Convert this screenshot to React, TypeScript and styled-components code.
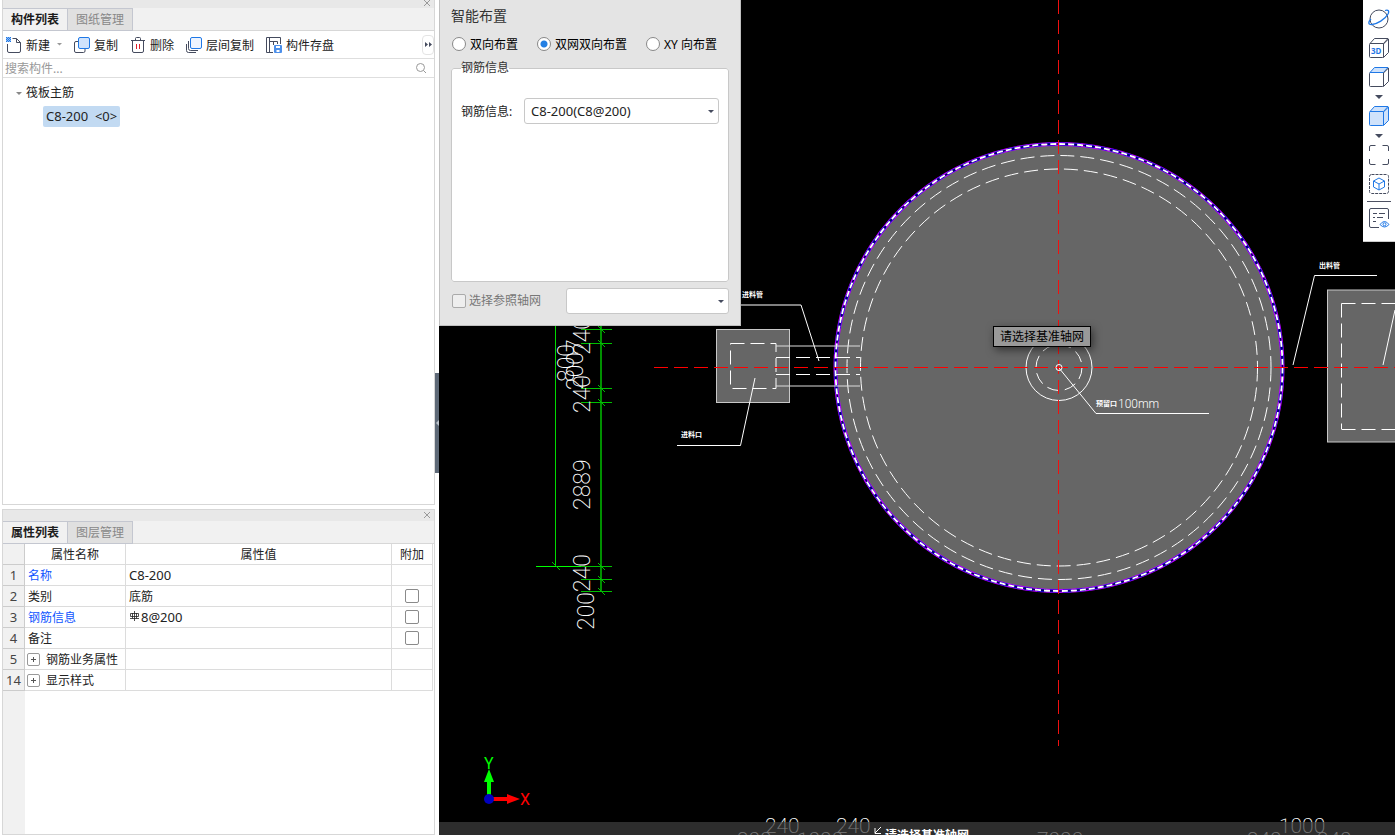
import React from "react";
import styled, { createGlobalStyle } from "styled-components";

const GlobalStyle = createGlobalStyle`
  * { box-sizing: border-box; }
  html, body { margin: 0; padding: 0; }
  body {
    font-family: "Noto Sans", "Noto Sans CJK SC", sans-serif;
    font-size: 12px;
    line-height: 20px;
    color: #222;
    background: #000;
  }
  button, input, select { font: inherit; color: inherit; margin: 0; }
`;

const Workspace = styled.div`
  display: flex;
  height: 100vh;
  overflow: hidden;
`;

const Sidebar = styled.aside`
  flex: 0 0 439px;
  display: grid;
  grid-template-columns: 433px 4px;
  grid-template-rows: 505px 1fr;
  row-gap: 4px;
  padding-left: 2px;
  background: #fff;
`;

const Panel = styled.section`
  display: flex;
  flex-direction: column;
  min-height: 0;
  border: 1px solid #d7d7d7;
  border-top: 0;
  background: #fff;
`;

const PanelBar = styled.div<{ $height: number }>`
  display: flex;
  align-items: center;
  justify-content: flex-end;
  flex: none;
  height: ${(p) => p.$height}px;
  padding: 0 2px 2px 0;
  background: #e8e8e8;
  border-top: ${(p) => (p.$height > 10 ? "1px solid #d7d7d7" : "0")};
`;

const CloseButton = styled.button`
  display: grid;
  place-items: center;
  width: 10px;
  height: 10px;
  padding: 0;
  border: 0;
  background: none;
`;

const TabBar = styled.div`
  display: flex;
  flex: none;
  height: 23px;
  background: #f1f1f1;
  border-bottom: 1px solid #d7d7d7;
`;

const Tab = styled.button<{ $active?: boolean }>`
  width: 65px;
  height: 23px;
  padding: 0;
  border: 1px solid #c4c7d0;
  border-width: 1px 1px 1px 0;
  background: ${(p) => (p.$active ? "#f1f1f1" : "#e0e0e0")};
  color: ${(p) => (p.$active ? "#1c1c1c" : "#888")};
  font-weight: ${(p) => (p.$active ? 700 : 400)};
  line-height: 20px;
`;

const Toolbar = styled.div`
  display: flex;
  align-items: center;
  flex: none;
  height: 28px;
  padding-left: 3px;
  gap: 12px;
  border-bottom: 1px solid #dedede;
`;

const Caption = styled.span`
  padding-top: 2px;
`;

const ToolButton = styled.button`
  display: flex;
  align-items: center;
  gap: 4px;
  height: 26px;
  padding: 0;
  border: 0;
  background: none;
  white-space: nowrap;
`;

const MenuMark = styled.span`
  display: flex;
  padding-left: 3px;
`;

const MoreButton = styled.button`
  display: grid;
  place-items: center;
  width: 12px;
  height: 20px;
  margin-left: auto;
  padding: 0;
  border: 1px solid #e4e4e4;
  border-radius: 4px;
  background: #fff;
`;

const SearchRow = styled.label`
  display: flex;
  align-items: center;
  flex: none;
  height: 19px;
  padding: 0 7px 0 2px;
  border-bottom: 1px solid #dedede;
`;

const SearchInput = styled.input`
  flex: 1;
  min-width: 0;
  height: 18px;
  padding: 2px 0 0;
  border: 0;
  outline: 0;
  background: none;
  &::placeholder { color: #999; opacity: 1; }
`;

const Tree = styled.ul`
  margin: 0;
  padding: 5px 0 0 13px;
  list-style: none;
`;

const TreeGroup = styled.div`
  display: flex;
  align-items: center;
  gap: 4px;
`;

const TreeItem = styled.button`
  display: block;
  height: 21px;
  margin: 3px 0 0 27px;
  padding: 0 3px 2px;
  border: 0;
  border-radius: 2px;
  background: #c2daf2;
  font-size: 13px;
  line-height: 18px;
  white-space: pre;
`;

const Splitter = styled.button`
  grid-column: 2;
  grid-row: 1 / 3;
  align-self: start;
  display: grid;
  place-items: center;
  width: 4px;
  height: 100px;
  margin-top: 373px;
  padding: 0;
  border: 0;
  background: #5e6977;
`;

const PropertyArea = styled.div`
  flex: 1;
  background: linear-gradient(to right, #f1f1f1 22px, #fff 22px);
`;

const PropertyTable = styled.table`
  width: 430px;
  table-layout: fixed;
  border-collapse: separate;
  border-spacing: 0;
  th, td {
    height: 21px;
    padding: 2px 3px 0;
    border-right: 1px solid #dcdcdc;
    border-bottom: 1px solid #dcdcdc;
    font-weight: 400;
    line-height: 18px;
    text-align: left;
    white-space: nowrap;
  }
  thead th { text-align: center; }
  td:last-child { padding-top: 0; text-align: center; }
`;

const RowNumber = styled.th`
  && { padding: 0; text-align: center; color: #444; border-color: #ccc; font-size: 13px; }
`;

const NameCell = styled.td<{ $link?: boolean }>`
  color: ${(p) => (p.$link ? "#0f55ff" : "#222")};
`;

const ValueCell = styled.td<{ $latin?: boolean }>`
  font-size: ${(p) => (p.$latin ? 13 : 12)}px;
  && { padding-top: ${(p) => (p.$latin ? 0 : 2)}px; }
`;

const ExpandButton = styled.button`
  display: inline-grid;
  place-items: center;
  width: 13px;
  height: 13px;
  margin: 0 6px 0 -1px;
  padding: 0;
  border: 1px solid #999;
  border-radius: 2px;
  background: #fff;
  vertical-align: 1px;
`;

const Check = styled.input<{ $size: number }>`
  appearance: none;
  flex: none;
  display: block;
  width: ${(p) => p.$size}px;
  height: ${(p) => p.$size}px;
  margin: 0 auto;
  border: 1px solid #8a8a8a;
  border-radius: 2px;
  background: #fff;
  &:disabled { border-color: #aaa; background: #eee; margin: 0; }
`;

const Viewport = styled.main`
  position: relative;
  flex: 1;
  min-width: 0;
  overflow: hidden;
  background: #000;
`;

const Drawing = styled.svg`
  display: block;
  width: 100%;
  height: 100%;
  font-family: Roboto, "Noto Sans CJK SC", sans-serif;
`;

const Dialog = styled.form`
  position: absolute;
  top: 0;
  left: 0;
  width: 302px;
  padding: 5px 12px 11px;
  border: 1px solid #c0c0c0;
  border-top: 0;
  background: #e4e4e4;
`;

const DialogTitle = styled.h1`
  margin: 0 0 0 -1px;
  color: #333;
  font-size: 14px;
  font-weight: 400;
  line-height: 22px;
`;

const RadioRow = styled.div`
  display: flex;
  align-items: center;
  gap: 19px;
  height: 20px;
  margin-top: 7px;
  color: #000;
  label { display: flex; align-items: center; gap: 4px; white-space: nowrap; }
`;

const Radio = styled.input`
  appearance: none;
  width: 14px;
  height: 14px;
  border: 1px solid #888;
  border-radius: 50%;
  background: #fff;
  &:checked { background: radial-gradient(circle, #237fe3 3px, #fff 4px); }
`;

const Group = styled.fieldset`
  height: 224px;
  min-width: 0;
  margin: 4px -1px 0;
  padding: 20px 9px 0;
  border: 1px solid #c8c8c8;
  border-radius: 3px;
  background: #fff;
  legend {
    padding: 0;
    color: #333;
    line-height: 20px;
  }
`;

const Field = styled.div`
  display: flex;
  align-items: center;
  justify-content: space-between;
  label { padding-top: 2px; }
`;

const SelectBox = styled.div<{ $width: number }>`
  position: relative;
  width: ${(p) => p.$width}px;
  svg { position: absolute; right: 5px; top: 12px; pointer-events: none; }
  select {
    display: block;
    appearance: none;
    width: 100%;
    height: 26px;
    padding: 0 16px 0 6px;
    border: 1px solid #c8c8c8;
    border-radius: 3px;
    background: #fff;
    font-size: 13px;
  }
`;

const AxisRow = styled.div`
  display: flex;
  align-items: center;
  justify-content: space-between;
  margin: 6px -1px 0 0;
  label { display: flex; align-items: center; gap: 3px; color: #777; }
`;

const ViewTools = styled.nav`
  position: absolute;
  top: 0;
  right: 0;
  display: flex;
  flex-direction: column;
  align-items: center;
  width: 32px;
  height: 242px;
  padding-top: 8px;
  border-bottom: 1px solid #ccc;
  background: #fff;
`;

const ViewButton = styled.button<{ $gap?: number }>`
  display: grid;
  place-items: center;
  flex: none;
  padding: 0;
  border: 0;
  margin-bottom: ${(p) => p.$gap ?? 7}px;
  background: none;
`;

const Divider = styled.hr`
  flex: none;
  width: 24px;
  height: 1px;
  margin: 0 0 5px;
  border: 0;
  background: #4d5162;
`;

const Hint = styled.div`
  position: absolute;
  top: 326px;
  left: 554px;
  height: 21px;
  padding: 0 6px;
  border: 1px solid #000;
  background: #999;
  box-shadow: 2px 3px 8px rgba(0, 0, 0, 0.5);
  color: #000;
  line-height: 19px;
  white-space: nowrap;
`;

const StatusBar = styled.footer`
  position: absolute;
  right: 0;
  bottom: 0;
  left: 0;
  display: flex;
  gap: 3px;
  height: 13px;
  padding: 4px 0 0 435px;
  overflow: hidden;
  background: rgba(64, 64, 64, 0.7);
  color: #fff;
  font-weight: 700;
  line-height: 20px;
`;

const INK = "#454b5e";
const BLUE = "#1f78e6";

function Caret({ size = 6, color = INK }: { size?: number; color?: string }) {
  return (
    <svg width={size} height={size / 2} viewBox="0 0 6 3" aria-hidden="true">
      <path d="M0 0h6L3 3z" fill={color} />
    </svg>
  );
}

function CloseIcon() {
  return (
    <svg width="8" height="8" viewBox="0 0 8 8" stroke="#999" aria-hidden="true">
      <path d="M1 1l6 6M7 1L1 7" />
    </svg>
  );
}

const iconProps = { width: 16, height: 16, viewBox: "0 0 16 16", fill: "none", stroke: INK, "aria-hidden": true } as const;

function NewIcon() {
  return (
    <svg {...iconProps}>
      <path d="M1.500 7V14Q1.500 15.500 3 15.500H13Q14.500 15.500 14.500 14V5.500L10.500 1.500H6.500M10.500 1.500V5.500H14.500" />
      <path d="M0 0h5v5H0z" fill="#8fbcf5" stroke="none" />
      <path d="M0 .5h5M0 2.500h5M0 4.500h5" stroke={BLUE} strokeDasharray="1 1" />
      <path d="M1 1.500h4M1 3.500h4" stroke={BLUE} strokeDasharray="1 1" />
    </svg>
  );
}

function CopyIcon({ layers }: { layers?: boolean }) {
  return (
    <svg {...iconProps}>
      {layers ? (
        <path d="M2.500 4V11.500Q2.500 13.500 4.500 13.500H12M.5 7V13.500Q.5 15.500 2.500 15.500H10" />
      ) : (
        <path d="M4 4.500H2Q.5 4.500 .5 6V14Q.5 15.500 2 15.500H9.500Q11 15.500 11 14V12" />
      )}
      <rect x="4.500" y=".5" width="11" height="11" rx="1.500" fill={layers ? "#edf4ff" : "#d0e3fc"} stroke={BLUE} />
    </svg>
  );
}

function DeleteIcon() {
  return (
    <svg {...iconProps}>
      <path d="M1 3.500H15M2.500 3.500V14Q2.500 15.500 4 15.500H12Q13.500 15.500 13.500 14V3.500M5.500 3V1.500Q5.500 .5 6.500 .5H9.500Q10.500 .5 10.500 1.500V3" />
      <path d="M6.500 7v5M9.500 7v5" stroke="#e01f2b" />
    </svg>
  );
}

function SaveIcon() {
  return (
    <svg {...iconProps}>
      <path d="M7 15.500H.5V.5H14.500V7M3.500 .5V15.500M3.500 4.500H11.500V7M7.500 8V4.500" />
      <rect x="8" y="8" width="8" height="8" rx="1" fill="#4c8fea" stroke="none" />
      <path d="M10 9h4v2h-4zM10.500 13h3v2h-3z" fill="#fff" stroke="none" />
    </svg>
  );
}

const viewIcon = { width: 22, height: 22, viewBox: "0 0 22 22", fill: "none", stroke: INK, "aria-hidden": true } as const;

function OrbitIcon() {
  return (
    <svg {...viewIcon}>
      <circle cx="11" cy="11" r="9" />
      <path d="M3 11C0 14 0 17 4 16.500C9 16 17 11.500 20 6C21.500 3 20.500 1.500 17 2.500" stroke={BLUE} strokeWidth="1.300" />
    </svg>
  );
}

function CubeIcon({ kind }: { kind: "label" | "top" | "solid" }) {
  const line = kind === "solid" ? BLUE : INK;
  return (
    <svg {...viewIcon} stroke={line}>
      <path
        d="M1.500 7.500Q1.500 6.500 2.500 6.500H14.500Q15.500 6.500 15.500 7.500V19.500Q15.500 20.500 14.500 20.500H2.500Q1.500 20.500 1.500 19.500Z"
        fill={kind === "solid" ? "#cfe2fb" : "none"}
      />
      <path
        d="M2 6.500L6.500 1.500H20L15.500 6.500Z"
        fill={kind === "label" ? "none" : "#cfe2fb"}
        stroke={kind === "label" ? INK : BLUE}
      />
      <path d="M20.500 2V15.500L15.500 20.500V7Z" fill={kind === "solid" ? "#cfe2fb" : "none"} />
      {kind === "label" && (
        <text x="3" y="17" fontSize="8" fontWeight="700" fill={BLUE} stroke="none">3D</text>
      )}
    </svg>
  );
}

function ExtentsIcon() {
  return (
    <svg {...viewIcon}>
      <path d="M1.500 7V3Q1.500 1.500 3 1.500H7.500M14.500 1.500H19Q20.500 1.500 20.500 3V7M20.500 15V19Q20.500 20.500 19 20.500H14.500M7.500 20.500H3Q1.500 20.500 1.500 19V15" />
    </svg>
  );
}

function IsolateIcon() {
  return (
    <svg {...viewIcon}>
      <rect x="1.500" y="1.500" width="19" height="19" rx="2" strokeDasharray="3 1" />
      <path d="M11 5L16.500 8V14L11 17L5.500 14V8ZM5.500 8L11 11L16.500 8M11 11V17" stroke={BLUE} />
    </svg>
  );
}

function DisplayIcon() {
  return (
    <svg {...viewIcon}>
      <path d="M11 20.500H3Q1.500 20.500 1.500 19V3Q1.500 1.500 3 1.500H19Q20.500 1.500 20.500 3V12M5 6.500H9M11 6.500H17M5 10.500H7M9 10.500H15M5 14.500H8" />
      <path d="M12 17.500Q16.500 11.500 21 17.500Q16.500 22.500 12 17.500Z" stroke={BLUE} />
      <circle cx="16.500" cy="17.300" r="1.500" stroke={BLUE} />
    </svg>
  );
}

const toolItems = [
  { label: "复制", icon: <CopyIcon /> },
  { label: "删除", icon: <DeleteIcon /> },
  { label: "层间复制", icon: <CopyIcon layers /> },
  { label: "构件存盘", icon: <SaveIcon /> },
];

type Property = { no: number; name: string; value?: string; link?: boolean; check?: boolean; group?: boolean; bar?: boolean; latin?: boolean };

const properties: Property[] = [
  { no: 1, name: "名称", value: "C8-200", link: true, latin: true },
  { no: 2, name: "类别", value: "底筋", check: true },
  { no: 3, name: "钢筋信息", value: "8@200", link: true, check: true, bar: true, latin: true },
  { no: 4, name: "备注", check: true },
  { no: 5, name: "钢筋业务属性", group: true },
  { no: 14, name: "显示样式", group: true },
];

const BarGlyph = styled.svg`
  margin: 0 1px;
  vertical-align: 1px;
`;

function RebarMark() {
  return (
    <BarGlyph width="10" height="10" viewBox="0 0 10 10" fill="none" stroke="#222" role="img" aria-label="HRB400">
      <path d="M4.500 0V10M0 7.500H9M.5 2.500H8.500V5.500H.5ZM2.500 2V7.500M6.500 2V7.500" strokeWidth=".8" />
    </BarGlyph>
  );
}

const ticks = [329, 343, 388, 402, 566, 579, 591];

const dimensionLabels = [
  { x: 590, y: 355, text: "240" },
  { x: 583, y: 390, text: "2007" },
  { x: 574, y: 382, text: "800" },
  { x: 590, y: 413, text: "240" },
  { x: 590, y: 510, text: "2889" },
  { x: 590, y: 592, text: "240" },
  { x: 594, y: 630, text: "200" },
];

const bottomLabels = [
  { x: 765, y: 833, text: "240" },
  { x: 836, y: 833, text: "240" },
  { x: 1279, y: 833, text: "1000" },
  { x: 737, y: 847, text: "200" },
  { x: 797, y: 847, text: "1000" },
  { x: 1037, y: 847, text: "7000" },
  { x: 1247, y: 847, text: "240" },
  { x: 1317, y: 847, text: "240" },
];

function PlanDrawing() {
  return (
    <Drawing viewBox="439 0 956 835" preserveAspectRatio="xMinYMin slice" role="img" aria-label="筏板平面图">
      <g fill="#666" stroke="#c8c8c8">
        <rect x="716.500" y="329.500" width="73" height="73" />
        <rect x="1327.500" y="290" width="80" height="152" />
      </g>
      <circle cx="1059" cy="367.500" r="224" fill="#666" />
      <g fill="none">
        <circle cx="1059" cy="367.500" r="223.500" stroke="#b400ff" strokeWidth="4" />
        <circle cx="1059" cy="367.500" r="223.500" stroke="#1800d8" strokeWidth="3" strokeDasharray="9 4" />
        <circle cx="1059" cy="367.500" r="223.500" stroke="#000060" strokeWidth="1.500" />
        <circle cx="1059" cy="367.500" r="223.500" stroke="#fff" strokeWidth="1.800" strokeDasharray="6 3" />
      </g>
      <g fill="none" stroke="#fff">
        <circle cx="1059" cy="367.500" r="212" strokeDasharray="14 6" />
        <circle cx="1059" cy="367.500" r="198.500" strokeDasharray="14 6" />
        <circle cx="1059" cy="367.500" r="33" />
        <circle cx="1059" cy="367.500" r="23" strokeDasharray="12 6" />
        <path d="M730.500 343.500H776V388.500H730.500ZM776 357.500H860M776 374.500H860" strokeDasharray="14 6" />
        <path d="M1341.500 303.500V429M1341.500 303.500H1395M1341.500 429.500H1395" strokeDasharray="14 6" />
        <path d="M776 346H860M776 386H860" stroke="#ddd" />
        <path d="M741 305H801L819 361M755 378L740.500 445.500H677M1293 365L1314.500 275.500H1377M1395 310L1383 365M1059 368L1096 413.500H1209" />
      </g>
      <path d="M654 367.500H1395" fill="none" stroke="#ff0000" strokeDasharray="14 6" />
      <path d="M1058.500 0V746" fill="none" stroke="#f01010" strokeDasharray="14 6" />
      <circle cx="1059" cy="367.500" r="3" fill="none" stroke="#fff" />
      <g stroke="#00c000">
        <path d="M555.500 325V566.500" stroke="#00d800" />
        <path d="M601 325V591" stroke="#009000" strokeWidth="2" />
        <path d="M536 566.500H612" stroke="#00ff00" />
        {ticks.map((y) => (
          <path key={y} d={`M581 ${y + 0.5}H612M598 ${y - 3}L605 ${y + 4}`} />
        ))}
        <path d="M552 562L560 570" />
      </g>
      <g fill="#fff" fontSize="23" fontWeight="200">
        {dimensionLabels.map((d) => (
          <text key={`${d.x}-${d.y}`} transform={`translate(${d.x} ${d.y}) rotate(-90)`}>{d.text}</text>
        ))}
        {bottomLabels.map((d) => (
          <text key={`${d.x}-${d.y}`} x={d.x} y={d.y} fontSize="21">{d.text}</text>
        ))}
      </g>
      <g fill="#fff" fontSize="7" fontWeight="700">
        <text x="742" y="297">进料管</text>
        <text x="681" y="437">进料口</text>
        <text x="1319" y="268">出料管</text>
        <text x="1096" y="406">预留口</text>
        <text x="1118" y="408" fontSize="12" fontWeight="300">100mm</text>
      </g>
      <path d="M489 799V782" stroke="#00ff00" strokeWidth="4" />
      <path d="M489 769L494 782H484Z" fill="#00ff00" />
      <path d="M489 799H507" stroke="#f00" strokeWidth="4" />
      <path d="M520 799L507 794V804Z" fill="#f00" />
      <circle cx="489" cy="799" r="5" fill="#0000c0" />
      <text x="484" y="769" fontSize="16" fill="#00ff00">Y</text>
      <text x="520" y="805" fontSize="16" fill="#f00">X</text>
    </Drawing>
  );
}

export default function App() {
  return (
    <>
      <GlobalStyle />
      <Workspace>
        <Sidebar>
          <Panel>
            <PanelBar $height={8}>
              <CloseButton aria-label="关闭"><CloseIcon /></CloseButton>
            </PanelBar>
            <TabBar>
              <Tab $active>构件列表</Tab>
              <Tab>图纸管理</Tab>
            </TabBar>
            <Toolbar>
              <ToolButton>
                <NewIcon />
                <Caption>新建</Caption>
                <MenuMark><Caret size={5} color="#999" /></MenuMark>
              </ToolButton>
              {toolItems.map((t) => (
                <ToolButton key={t.label}>
                  {t.icon}
                  <Caption>{t.label}</Caption>
                </ToolButton>
              ))}
              <MoreButton aria-label="更多">
                <svg width="7" height="5" viewBox="0 0 7 5" aria-hidden="true">
                  <path d="M0 0L3 2.500L0 5ZM4 0L7 2.500L4 5Z" fill={INK} />
                </svg>
              </MoreButton>
            </Toolbar>
            <SearchRow>
              <SearchInput placeholder="搜索构件..." aria-label="搜索构件" />
              <svg width="12" height="12" viewBox="0 0 12 12" fill="none" stroke="#999" aria-hidden="true">
                <circle cx="5.500" cy="5.500" r="4" />
                <path d="M8.500 8.500L11 11" />
              </svg>
            </SearchRow>
            <Tree>
              <li>
                <TreeGroup><Caret color="#888" />筏板主筋</TreeGroup>
                <TreeItem>{"C8-200  <0>"}</TreeItem>
              </li>
            </Tree>
          </Panel>
          <Splitter aria-label="收起面板">
            <svg width="3" height="6" viewBox="0 0 3 6" aria-hidden="true"><path d="M3 0V6L0 3Z" fill="#bcc3cc" /></svg>
          </Splitter>
          <Panel>
            <PanelBar $height={12}>
              <CloseButton aria-label="关闭"><CloseIcon /></CloseButton>
            </PanelBar>
            <TabBar>
              <Tab $active>属性列表</Tab>
              <Tab>图层管理</Tab>
            </TabBar>
            <PropertyArea>
              <PropertyTable>
                <colgroup>
                  <col width="22" />
                  <col width="101" />
                  <col />
                  <col width="41" />
                </colgroup>
                <thead>
                  <tr><RowNumber aria-label="序号" /><th>属性名称</th><th>属性值</th><th>附加</th></tr>
                </thead>
                <tbody>
                  {properties.map((p) => (
                    <tr key={p.no}>
                      <RowNumber scope="row">{p.no}</RowNumber>
                      <NameCell $link={p.link}>
                        {p.group && (
                          <ExpandButton aria-label={`展开${p.name}`}>
                            <svg width="7" height="7" viewBox="0 0 7 7" stroke="#555" aria-hidden="true"><path d="M3.500 1V6M1 3.500H6" /></svg>
                          </ExpandButton>
                        )}
                        {p.name}
                      </NameCell>
                      <ValueCell $latin={p.latin}>{p.bar && <RebarMark />}{p.value}</ValueCell>
                      <td>{p.check && <Check type="checkbox" $size={14} aria-label={`附加${p.name}`} />}</td>
                    </tr>
                  ))}
                </tbody>
              </PropertyTable>
            </PropertyArea>
          </Panel>
        </Sidebar>
        <Viewport>
          <PlanDrawing />
          <Hint role="tooltip">请选择基准轴网</Hint>
          <Dialog>
            <DialogTitle>智能布置</DialogTitle>
            <RadioRow>
              {["双向布置", "双网双向布置", "XY 向布置"].map((label, i) => (
                <label key={label}>
                  <Radio type="radio" name="layout" defaultChecked={i === 1} />
                  <Caption>{label}</Caption>
                </label>
              ))}
            </RadioRow>
            <Group>
              <legend>钢筋信息</legend>
              <Field>
                <label htmlFor="rebar">钢筋信息:</label>
                <SelectBox $width={195}>
                  <select id="rebar"><option>C8-200(C8@200)</option></select>
                  <Caret />
                </SelectBox>
              </Field>
            </Group>
            <AxisRow>
              <label><Check type="checkbox" $size={14} disabled />选择参照轴网</label>
              <SelectBox $width={163}>
                <select aria-label="参照轴网"><option></option></select>
                <Caret />
              </SelectBox>
            </AxisRow>
          </Dialog>
          <ViewTools aria-label="视图">
            <ViewButton aria-label="动态观察"><OrbitIcon /></ViewButton>
            <ViewButton aria-label="三维"><CubeIcon kind="label" /></ViewButton>
            <ViewButton aria-label="俯视"><CubeIcon kind="top" /></ViewButton>
            <ViewButton aria-label="俯视选项" $gap={6}><Caret size={8} /></ViewButton>
            <ViewButton aria-label="实体"><CubeIcon kind="solid" /></ViewButton>
            <ViewButton aria-label="实体选项" $gap={6}><Caret size={8} /></ViewButton>
            <ViewButton aria-label="全屏"><ExtentsIcon /></ViewButton>
            <ViewButton aria-label="局部三维" $gap={6}><IsolateIcon /></ViewButton>
            <Divider />
            <ViewButton aria-label="显示设置"><DisplayIcon /></ViewButton>
          </ViewTools>
          <StatusBar>
            <svg width="8" height="9" viewBox="0 0 8 9" fill="none" stroke="#fff" aria-hidden="true"><path d="M7 1L1 7M1 2V7.500H7" /></svg>
            请选择基准轴网
          </StatusBar>
        </Viewport>
      </Workspace>
    </>
  );
}
